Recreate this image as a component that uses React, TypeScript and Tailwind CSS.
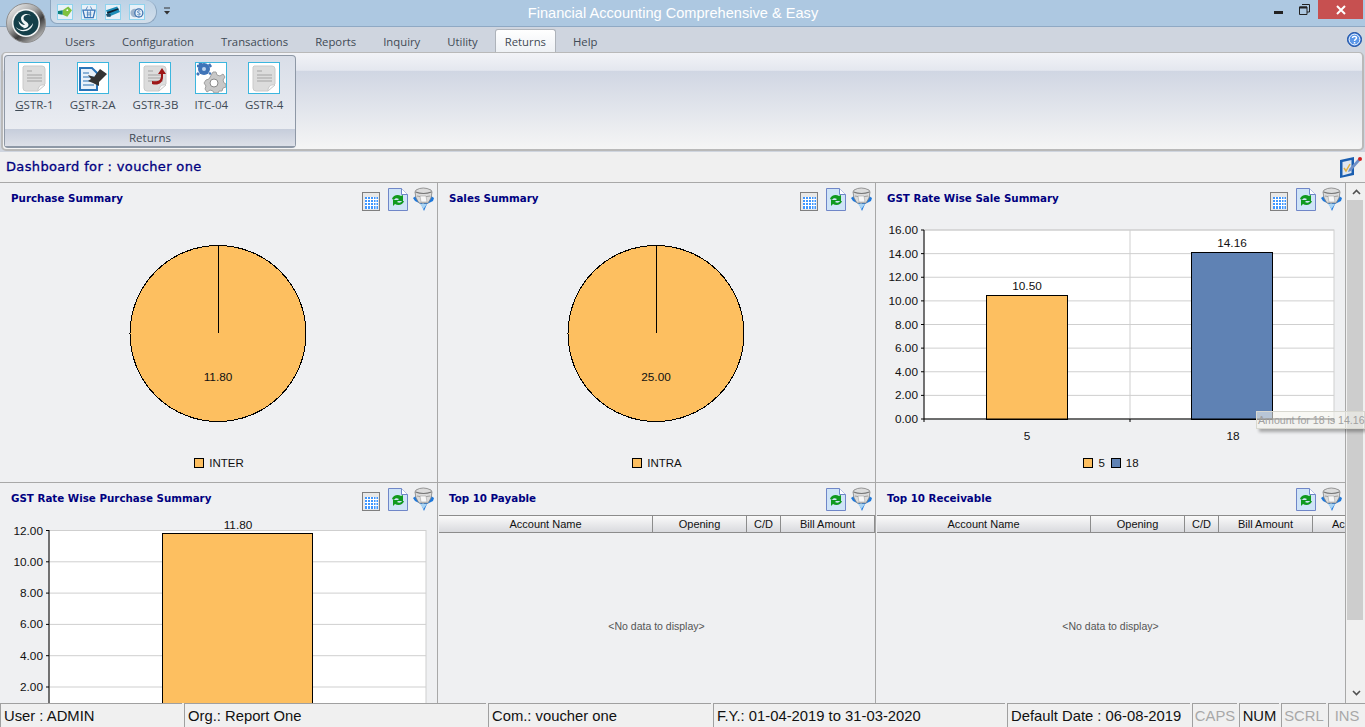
import React from "react";

const ui = "font-['Open_Sans',sans-serif]";
const navy = "font-['DejaVu_Sans',sans-serif] font-bold text-[#000080]";
const chartText = "font-['Liberation_Sans',sans-serif] text-[11.8px]";

function Logo() {
  return (
    <svg width="42" height="42" viewBox="0 0 42 42">
      <defs>
        <linearGradient id="chrome" x1="0.1" y1="0" x2="0.9" y2="1">
          <stop offset="0" stopColor="#f6f6f6" />
          <stop offset="0.4" stopColor="#a5a5a5" />
          <stop offset="0.62" stopColor="#3c3c3c" />
          <stop offset="1" stopColor="#e2e2e2" />
        </linearGradient>
      </defs>
      <circle cx="21" cy="21" r="19.500" fill="url(#chrome)" stroke="#8d8d8d" />
      <circle cx="21" cy="21" r="14" fill="#f4f6f6" />
      <circle cx="21" cy="21" r="12.500" fill="#143f49" />
      <path d="M26.500 14.500c-2.500-3-8-2-8 1.800 0 3 5 3.700 5 6.700 0 3-4 4-7.500 2.500 1 .5 2 .5 3 0-3-.8-5-3-5.500-6.500 2 3 4 3.800 6.500 4-1.500-1.800-4-3.300-4-6.500 0-4.500 7.500-6.500 10.500-2z" fill="#f0f6f6" />
      <path d="M10.500 24.500c4 5 13 5 17.500-3.500 0 8-13 12-17.500 3.500z" fill="#f0f6f6" />
    </svg>
  );
}

function QatBox({ children }: { children: React.ReactNode }) {
  return <div className="w-[16px] h-[16px] border border-[#8fd3ee] bg-[#e8f1f8] flex items-center justify-center">{children}</div>;
}

function Qat() {
  return (
    <div className="h-[24px] w-[107px] ml-[50px] rounded-br-[14px] rounded-tr-[14px] rounded-bl-[8px] border border-t-0 border-[#8da6bf] bg-gradient-to-b from-[#bdd2e6] to-[#d2deea] flex items-center gap-[8px] pl-[6px] pt-[1px]">
      <QatBox>
        <svg width="15" height="15" viewBox="0 0 15 15"><path d="M5 5l6-4 4 4-5 7-5-2z" fill="#7fc241" /><path d="M0 6l5-1v5l-5-1z" fill="#0e7f7a" /><circle cx="10" cy="5" r="1" fill="#fff" /></svg>
      </QatBox>
      <QatBox>
        <svg width="15" height="15" viewBox="0 0 15 15"><path d="M1 5h13l-2 8H3z" fill="none" stroke="#3a76b8" strokeWidth="1.400" /><path d="M4 5l2-4M11 5L9 1M5 8h5M5 10h5M6 5v8M9 5v8" stroke="#3a76b8" strokeWidth="0.800" /></svg>
      </QatBox>
      <QatBox>
        <svg width="15" height="15" viewBox="0 0 15 15"><path d="M0 5l12-4 3 6-12 5z" fill="#1d8db8" /><path d="M1 7l12-4 .7 1.400-12 4.600z" fill="#123" /><path d="M0 9h5v3H1z" fill="#1b4f6d" /></svg>
      </QatBox>
      <QatBox>
        <svg width="15" height="15" viewBox="0 0 15 15"><circle cx="5" cy="8" r="4.500" fill="#9fb4cc" /><circle cx="9.500" cy="8" r="5" fill="#3f73b0" /><circle cx="9.500" cy="8" r="3.600" fill="#e8f1f8" /><path d="M11 6.200c-1-.8-3-.6-3 .7 0 1.400 3 .8 3 2.200 0 1.200-2 1.300-3 .6" fill="none" stroke="#3f73b0" strokeWidth="1" /></svg>
      </QatBox>
    </div>
  );
}

function TitleBar() {
  return (
    <div className="h-[27px] shrink-0 bg-[#adc8e1] border-b border-[#8fa9c4] flex items-start">
      <Qat />
      <svg className="ml-[6px] mt-[7px]" width="9" height="9" viewBox="0 0 9 9"><path d="M1 1h6" stroke="#333" /><path d="M1 4h6L4 7.500z" fill="#333" /></svg>
      <div className="flex-1 text-center text-white text-[14.6px] leading-[26px] pr-[100px] font-['Liberation_Sans',sans-serif]">Financial Accounting Comprehensive &amp; Easy</div>
      <div className="flex items-start">
        <svg className="mt-[11px] mr-[16px]" width="9" height="3" viewBox="0 0 9 3"><rect width="9" height="3" fill="#222" /></svg>
        <svg className="mt-[4px] mr-[8px]" width="11" height="11" viewBox="0 0 11 11"><path d="M3 .5h7.500v7.500H8M.5 3h7.500v7.500H.5z" fill="none" stroke="#222" /><path d="M.5 3.500h7.500" stroke="#222" strokeWidth="2" /></svg>
        <div className="w-[45px] h-[19px] mr-[2px] bg-[#c75050] flex items-center justify-center">
          <svg width="10" height="10" viewBox="0 0 10 10"><path d="M1 1l8 8M9 1l-8 8" stroke="#fff" strokeWidth="2" /></svg>
        </div>
      </div>
    </div>
  );
}

function TabRow() {
  const tabs = ["Users", "Configuration", "Transactions", "Reports", "Inquiry", "Utility", "Returns", "Help"];
  return (
    <div className={`h-[25px] shrink-0 bg-[#cfd5df] flex items-end pl-[65px] relative ${ui}`}>
      <div className="flex gap-[27px] text-[11.3px] text-[#3f4a55] leading-[23px] items-end">
        {tabs.map((t) =>
          t === "Returns" ? (
            <div key={t} className="-mx-[10px] px-[9px] h-[23px] bg-gradient-to-b from-[#ffffff] to-[#eef1f5] border border-b-0 border-[#aeb3ba] rounded-t-[3px] text-[#3f4a55]">{t}</div>
          ) : (
            <div key={t} className="h-[22px]">{t}</div>
          ),
        )}
      </div>
      <svg className="absolute right-[3px] top-[5px]" width="15" height="15" viewBox="0 0 15 15">
        <circle cx="7.500" cy="7.500" r="7" fill="#2f6fd0" stroke="#1c4fa0" />
        <circle cx="7.500" cy="7.500" r="5.400" fill="#5a96e8" stroke="#fff" />
        <path d="M5.500 6c0-2.200 4-2.200 4 0 0 1.300-2 1.400-2 3" fill="none" stroke="#fff" strokeWidth="1.400" />
        <rect x="6.800" y="10" width="1.500" height="1.500" fill="#fff" />
      </svg>
    </div>
  );
}

function IconFrame({ children }: { children: React.ReactNode }) {
  return <div className="w-[32px] h-[32px] border border-[#3cb6de] bg-white flex items-center justify-center overflow-hidden">{children}</div>;
}

function Doc({ children }: { children?: React.ReactNode }) {
  return (
    <svg width="30" height="30" viewBox="0 0 30 30">
      <path d="M5 3h18q3 0 3 3v15l-7 7H7q-3 0-3-3V4z" fill="#dcdcdc" stroke="#cacaca" />
      <path d="M19 28c0-4 2-7 7-6z" fill="#f9f9f9" stroke="#c8c8c8" />
      <path d="M8 8h5M8 12h15M8 15h15M8 18h15" stroke="#a3a3a3" strokeWidth="1.200" />
      {children}
    </svg>
  );
}

function BlueDoc() {
  return (
    <svg width="30" height="30" viewBox="0 0 30 30">
      <path d="M2 5h12l5 5v17H2z" fill="#e9f1fa" stroke="#2a74b8" strokeWidth="2" />
      <path d="M5 10h6M5 14h11M5 18h11M5 22h11" stroke="#6a9ccc" strokeWidth="1.500" />
      <path d="M10 12l6 2 6-8 7 5-8 8v4l-6-3-5-2 3-2z" fill="#333" />
    </svg>
  );
}

function Gears() {
  return (
    <svg width="30" height="30" viewBox="0 0 30 30">
      <path d="M17 9h3l1 3 3 1 3-2 2 3-2 3 1 3 2 1v3l-3 1-1 3-3 0-1 2h-4l-1-2-3-1-3 2-2-3 1-3-2-3 2-3 3-1z" fill="#c8c8c8" stroke="#a0a0a0" />
      <circle cx="18" cy="20" r="4" fill="#fff" stroke="#8a8a8a" />
      <circle cx="8" cy="6" r="6" fill="#3f74b8" />
      <path d="M1 3h3V0h2M13 1l2 3M1 10l2 2M13 10l2 1" stroke="#3f74b8" strokeWidth="2.500" />
      <circle cx="8" cy="6" r="2" fill="#bcd3ec" />
    </svg>
  );
}

function Ribbon() {
  const items: { w: string; pre: string; u: string; post: string; icon: React.ReactNode }[] = [
    { w: "w-[59px]", pre: "", u: "G", post: "STR-1", icon: <Doc /> },
    { w: "w-[58px]", pre: "G", u: "S", post: "TR-2A", icon: <BlueDoc /> },
    { w: "w-[68px]", pre: "", u: "", post: "GSTR-3B", icon: <Doc><path d="M12 18c5 1 9 0 9-5v-2h-3l4-6 4 6h-3v3c0 6-5 9-11 7z" fill="#9e1616" /></Doc> },
    { w: "w-[44px]", pre: "", u: "", post: "ITC-04", icon: <Gears /> },
    { w: "w-[62px]", pre: "", u: "", post: "GSTR-4", icon: <Doc /> },
  ];
  return (
    <div className="h-[100px] shrink-0 bg-[#cfd5df] px-[1px]">
      <div className="h-[99px] rounded-[5px] border-2 border-t border-[#b9b9b9] bg-[linear-gradient(#f2f3f7_0%,#e4e7ef_18%,#d0d6e3_19%,#f5f5f5_100%)] pt-[2px] pl-[1px]">
        <div className={`w-[292px] h-[93px] rounded-[4px] border border-[#8e98a6] border-b-2 bg-gradient-to-b from-[#d9dee8] to-[#eef0f4] flex flex-col ${ui}`}>
          <div className="flex-1 flex pt-[6px]">
            {items.map((it) => (
              <div key={it.post} className={`${it.w} flex flex-col items-center text-[#3f4a55] text-[11.5px] leading-[16px]`}>
                <IconFrame>{it.icon}</IconFrame>
                <div className="mt-[3px] whitespace-nowrap">
                  {it.pre}
                  {it.u && <span className="underline">{it.u}</span>}
                  {it.post}
                </div>
              </div>
            ))}
          </div>
          <div className="h-[17px] bg-gradient-to-b from-[#c6cddb] to-[#dde0e8] text-center text-[11.5px] leading-[17px] text-[#3f4a55]">Returns</div>
        </div>
      </div>
    </div>
  );
}

function DashHeader() {
  return (
    <div className="h-[31px] shrink-0 bg-[#f0f0f0] border-b border-[#a8a8a8] flex items-center justify-between pl-[6px] pr-[3px]">
      <div className="font-['DejaVu_Sans',sans-serif] text-[#000080] text-[13px] tracking-[0.35px] [-webkit-text-stroke:0.3px_#000080]">Dashboard for : voucher one</div>
      <svg width="22" height="22" viewBox="0 0 22 22">
        <path d="M0 4l14-3v18L0 22z" fill="#1a5eb0" />
        <path d="M2.500 6l9-2v13l-9 2.500z" fill="#dfe6f0" />
        <path d="M4 12l2 3 4-7" fill="none" stroke="#e0b040" strokeWidth="1.500" />
        <path d="M9 13l9-10 2 2-9 10-3 1z" fill="#6f90c8" />
        <circle cx="20" cy="3" r="2" fill="#d02020" />
      </svg>
    </div>
  );
}

function GridIcon() {
  return (
    <svg width="18" height="19" viewBox="0 0 18 19">
      <rect x=".5" y=".5" width="17" height="18" fill="#e8e8e8" stroke="#7f7f7f" />
      <rect x="3" y="5" width="13" height="12" fill="#3f97ff" />
      <path d="M5.500 5v12M8.500 5v12M11.500 5v12M14 5v12M3 7.500h13M3 10.500h13M3 13.500h13" stroke="#fff" />
    </svg>
  );
}

function RefreshIcon() {
  return (
    <svg width="20" height="23" viewBox="0 0 20 23">
      <path d="M.5.5h13l6 6v16H.5z" fill="#cfe4f7" stroke="#6f86c8" />
      <path d="M13.500.5v6h6" fill="#fff" stroke="#6f86c8" />
      <path d="M4 11c1-4 6-5 9-3l2-1v6h-6l2-2c-2-1-4-1-5 1z" fill="#0f9a1e" />
      <path d="M16 13c-1 4-6 5-9 3l-2 2v-6h6l-2 2c2 1 4 1 5-1z" fill="#0f9a1e" />
    </svg>
  );
}

function FunnelIcon() {
  return (
    <svg width="21" height="24" viewBox="0 0 21 24">
      <path d="M0 11l3-2 7 8 8-8 3 2-1 3-6 3-3 7-3-7-6-3z" fill="#1e78dc" />
      <path d="M7 17h7l-3.500 5z" fill="#a8d4f5" />
      <path d="M3 3q7-4 15 0l1 2-1 6-3 5H6l-3-5-1-6z" fill="#dcdcdc" stroke="#808080" strokeWidth=".8" />
      <path d="M2.500 5q8 3 16 0" fill="none" stroke="#777" strokeWidth="1.200" />
      <path d="M4 9q6 2 13 0" fill="none" stroke="#a0a0a0" />
      <path d="M7 9h6l1 6H8z" fill="#f7f7f7" stroke="#999" strokeWidth=".5" />
    </svg>
  );
}

function PanelHead({ title, grid = true }: { title: string; grid?: boolean }) {
  return (
    <div className="h-[30px] shrink-0 flex items-start pl-[11px] pr-[3px] pt-[4px]">
      <div className={`${navy} flex-1 text-[10.3px] leading-[15px] pt-[4px]`}>{title}</div>
      <div className="flex items-start">
        {grid && <div className="mt-[5px] mr-[8px]"><GridIcon /></div>}
        <div className="mt-[1px] mr-[5px]"><RefreshIcon /></div>
        <FunnelIcon />
      </div>
    </div>
  );
}

function Legend({ items }: { items: { c: string; t: string }[] }) {
  return (
    <div className="flex justify-center items-center gap-[5px] pl-[2px] text-[11.5px] leading-[14px] text-[#111] font-['Liberation_Sans',sans-serif]">
      {items.map((i) => (
        <React.Fragment key={i.t}>
          <span className={`w-[10px] h-[10px] border border-black ${i.c}`} />
          <span className="mr-[1px]">{i.t}</span>
        </React.Fragment>
      ))}
    </div>
  );
}

function PiePanel({ title, value, legend }: { title: string; value: string; legend: string }) {
  return (
    <div className="flex flex-col h-full">
      <PanelHead title={title} />
      <div className="flex justify-center pt-[31px]">
        <svg width="179" height="179" viewBox="0 0 179 179" className={chartText}>
          <circle cx="89" cy="89.500" r="88" fill="#fdbf60" stroke="#000" shapeRendering="crispEdges" />
          <path d="M89.500 1v88" stroke="#000" shapeRendering="crispEdges" />
          <text x="89" y="137" textAnchor="middle" fill="#111">{value}</text>
        </svg>
      </div>
      <div className="mt-[33px]"><Legend items={[{ c: "bg-[#fdbf60]", t: legend }]} /></div>
    </div>
  );
}

function RateSaleChart() {
  const ys = ["16.00", "14.00", "12.00", "10.00", "8.00", "6.00", "4.00", "2.00", "0.00"];
  const left = 48;
  const top = 2;
  const step = 23.625;
  return (
    <svg width="466" height="226" viewBox="0 0 466 226" className={chartText}>
      <g transform="translate(0 4)">
        <rect x={left} y={top} width="410" height="189" fill="#fff" stroke="#cfcfcf" />
        {ys.map((y, i) => (
          <g key={y}>
            <path d={`M${left} ${top + i * step}h410`} stroke="#cfcfcf" />
            <path d={`M${left - 3} ${top + i * step}h3`} stroke="#000" />
            <text x={left - 6} y={top + i * step + 4} textAnchor="end" fill="#111">{y}</text>
          </g>
        ))}
        <path d={`M254 ${top}v189`} stroke="#cfcfcf" />
        <rect x="110.500" y="67.500" width="81" height="124" fill="#fdbf60" stroke="#000" />
        <rect x="315.500" y="24.500" width="81" height="167" fill="#5f82b4" stroke="#000" />
        <path d={`M${left} ${top}v189h410`} fill="none" stroke="#000" />
        <path d="M254 191v3M48 191v3M458 191v3" stroke="#000" />
        <text x="151" y="62" textAnchor="middle" fill="#111">10.50</text>
        <text x="356" y="19" textAnchor="middle" fill="#111">14.16</text>
        <text x="151" y="212" textAnchor="middle" fill="#111">5</text>
        <text x="357" y="212" textAnchor="middle" fill="#111">18</text>
      </g>
    </svg>
  );
}

function RatePurchaseChart() {
  const ys = ["12.00", "10.00", "8.00", "6.00", "4.00", "2.00"];
  return (
    <svg width="437" height="190" viewBox="0 0 437 190" className={chartText}>
      <rect x="49" y="17.500" width="377" height="173" fill="#fff" stroke="#cfcfcf" />
      {ys.map((y, i) => (
        <g key={y}>
          <path d={`M49 ${17.5 + i * 31.3}h377`} stroke="#cfcfcf" />
          <path d={`M46 ${17.5 + i * 31.3}h3`} stroke="#000" />
          <text x="43" y={21.5 + i * 31.3} textAnchor="end" fill="#111">{y}</text>
        </g>
      ))}
      <path d="M49 17v174" stroke="#000" />
      <rect x="162.500" y="20.500" width="150" height="180" fill="#fdbf60" stroke="#000" />
      <text x="238" y="16" textAnchor="middle" fill="#111">11.80</text>
    </svg>
  );
}

function DataTable({ extra }: { extra?: boolean }) {
  const cols = [
    ["w-[214px]", "Account Name"],
    ["w-[94px]", "Opening"],
    ["w-[34px]", "C/D"],
    ["w-[94px]", "Bill Amount"],
  ];
  return (
    <div className="flex-1 flex flex-col min-h-0 overflow-hidden mt-[2px]">
      <div className="flex h-[18px] shrink-0 ml-[1px] border-t border-b border-[#8c8c8c] bg-gradient-to-b from-[#fafafa] to-[#d9dade] text-[11px] leading-[16px] text-[#111] font-['Liberation_Sans',sans-serif]">
        {cols.map(([w, t]) => (
          <div key={t} className={`${w} shrink-0 text-center border-r border-[#8c8c8c]`}>{t}</div>
        ))}
        {extra && <div className="pl-[19px] whitespace-nowrap flex-1">Ac</div>}
      </div>
      <div className="flex-1 flex items-center justify-center pt-[18px] text-[10.5px] text-[#555] font-['Liberation_Sans',sans-serif]">&lt;No data to display&gt;</div>
    </div>
  );
}

function Panels() {
  return (
    <div className="w-[1345px] grid grid-cols-[438px_438px_469px] grid-rows-[300px_220px] overflow-hidden">
      <div className="border-r border-b border-[#a8a8a8] overflow-hidden"><PiePanel title="Purchase Summary" value="11.80" legend="INTER" /></div>
      <div className="border-r border-b border-[#a8a8a8] overflow-hidden"><PiePanel title="Sales Summary" value="25.00" legend="INTRA" /></div>
      <div className="border-b border-[#a8a8a8] overflow-hidden flex flex-col">
        <PanelHead title="GST Rate Wise Sale Summary" />
        <div className="mt-[11px] h-[226px]"><RateSaleChart /></div>
        <div className="mt-[6px]"><Legend items={[{ c: "bg-[#fdbf60]", t: "5" }, { c: "bg-[#5f82b4]", t: "18" }]} /></div>
      </div>
      <div className="border-r border-[#a8a8a8] overflow-hidden flex flex-col">
        <PanelHead title="GST Rate Wise Purchase Summary" />
        <RatePurchaseChart />
      </div>
      <div className="border-r border-[#a8a8a8] overflow-hidden flex flex-col">
        <PanelHead title="Top 10 Payable" grid={false} />
        <DataTable />
      </div>
      <div className="overflow-hidden flex flex-col">
        <PanelHead title="Top 10 Receivable" grid={false} />
        <DataTable extra />
      </div>
    </div>
  );
}

function Scrollbar() {
  return (
    <div className="w-[20px] shrink-0 border-l border-[#a8a8a8] bg-[#f0f0f0] flex flex-col pl-[1px]">
      <div className="h-[17px] flex items-center justify-center">
        <svg width="9" height="6" viewBox="0 0 9 6"><path d="M1 5l3.500-3.500L8 5" fill="none" stroke="#505050" strokeWidth="1.600" /></svg>
      </div>
      <div className="h-[420px] w-[16px] bg-[#cdcdcd]" />
      <div className="flex-1" />
      <div className="h-[20px] flex items-center justify-center">
        <svg width="9" height="6" viewBox="0 0 9 6"><path d="M1 1l3.500 3.500L8 1" fill="none" stroke="#505050" strokeWidth="1.600" /></svg>
      </div>
    </div>
  );
}

function StatusBar() {
  const cells: { w: string; t: string; dim?: boolean; center?: boolean }[] = [
    { w: "w-[182px]", t: "User : ADMIN" },
    { w: "w-[302px]", t: "Org.: Report One" },
    { w: "w-[223px]", t: "Com.: voucher one" },
    { w: "w-[292px]", t: "F.Y.: 01-04-2019 to 31-03-2020" },
    { w: "w-[183px]", t: "Default Date : 06-08-2019" },
    { w: "w-[45px]", t: "CAPS", dim: true, center: true },
    { w: "w-[40px]", t: "NUM", center: true },
    { w: "w-[45px]", t: "SCRL", dim: true, center: true },
    { w: "w-[37px]", t: "INS", dim: true, center: true },
  ];
  return (
    <div className="h-[24px] shrink-0 bg-[#f0f0f0] flex gap-[2px] font-['Liberation_Sans',sans-serif] text-[14.8px] leading-[24px]">
      {cells.map((c) => (
        <div key={c.t} className={`${c.w} shrink-0 border-t border-l border-[#a0a0a0] whitespace-nowrap overflow-hidden ${c.center ? "text-center" : "pl-[3px]"} ${c.dim ? "text-[#a8a8a8]" : "text-[#111]"}`}>{c.t}</div>
      ))}
    </div>
  );
}

function Tooltip() {
  return (
    <div className="absolute left-[1256px] top-[411px] w-[109px] h-[18px] bg-[#f4f4ec]/60 border border-[#d8d8d0] shadow-[3px_3px_3px_rgba(0,0,0,0.3)] text-[10.6px] leading-[16px] pl-[1px] text-[#a0a0a0] whitespace-nowrap font-['Liberation_Sans',sans-serif]">
      Amount for 18 is 14.16
    </div>
  );
}

export default function App() {
  return (
    <div className="w-[1365px] h-[727px] relative overflow-hidden flex flex-col bg-[#eff0f2]">
      <TitleBar />
      <TabRow />
      <Ribbon />
      <DashHeader />
      <div className="flex-1 min-h-0 flex bg-[#eff0f2]">
        <Panels />
        <Scrollbar />
      </div>
      <StatusBar />
      <div className="absolute left-[5px] top-[2px]"><Logo /></div>
      <Tooltip />
    </div>
  );
}
